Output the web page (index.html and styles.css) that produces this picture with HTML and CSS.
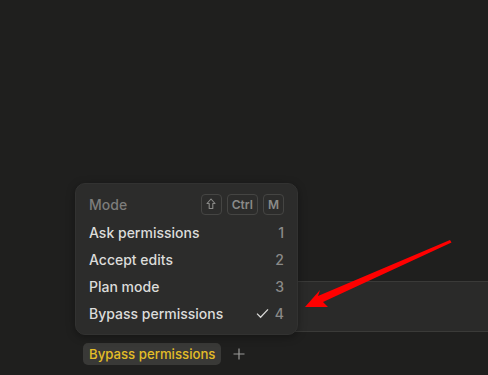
FILE: index.html
```html
<!DOCTYPE html>
<html>
<head>
<meta charset="utf-8">
<link rel="stylesheet" href="styles.css">
</head>
<body>
<div class="page">
  <div class="spacer"></div>
  <div class="composer"></div>
  <div class="toolbar">
    <span class="chip">Bypass permissions</span>
    <svg class="plus" width="12" height="12" viewBox="0 0 12 12"><path d="M6 0.5 V11.5 M0.5 6 H11.5" stroke="#9a9a98" stroke-width="1.2"/></svg>
  </div>

  <div class="menu">
    <div class="menu-head">
      <span class="menu-title">Mode</span>
      <span class="keys">
        <span class="key"><svg width="10" height="12" viewBox="0 0 10 12"><path d="M5 1 L9 5.5 L6.8 5.5 L6.8 10.5 L3.2 10.5 L3.2 5.5 L1 5.5 Z" fill="none" stroke="#8a8a88" stroke-width="1.1" stroke-linejoin="round"/></svg></span>
        <span class="key">Ctrl</span>
        <span class="key">M</span>
      </span>
    </div>
    <div class="item"><span>Ask permissions</span><span class="num">1</span></div>
    <div class="item"><span>Accept edits</span><span class="num">2</span></div>
    <div class="item"><span>Plan mode</span><span class="num">3</span></div>
    <div class="item"><span>Bypass permissions</span><span class="right"><svg class="check" width="13" height="11" viewBox="0 0 13 11"><path d="M1 5.6 L4.6 9.2 L12 1.4" fill="none" stroke="#d8d8d6" stroke-width="1.3"/></svg><span class="num">4</span></span></div>
  </div>

  <svg class="arrow" width="488" height="375" viewBox="0 0 488 375">
    <polygon fill="#ff0000" points="450,240 451.5,242.5 323,302 328,307 305,307 320,290 318,296"/>
  </svg>
</div>
</body>
</html>
```
FILE: styles.css
```css
html, body {
  margin: 0;
  padding: 0;
  background: #1f1f1e;
  font-family: Inter, "Noto Sans", sans-serif;
}
.page {
  position: relative;
  width: 488px;
  height: 375px;
  display: flex;
  flex-direction: column;
  overflow: hidden;
}
.spacer {
  height: 281px;
  flex: none;
}
.composer {
  height: 49px;
  margin-left: 120px;
  margin-right: -20px;
  background: #2a2a29;
  border: 1px solid #3a3a38;
  border-radius: 10px 0 0 10px;
  flex: none;
}
.toolbar {
  display: flex;
  align-items: center;
  gap: 12px;
  padding: 11px 0 0 83px;
}
.chip {
  background: #393937;
  color: #e3bd27;
  font-size: 13.2px;
  font-weight: 500;
  line-height: 22px;
  padding: 0 6px;
  border-radius: 5px;
}
.plus {
  display: block;
}
.menu {
  position: absolute;
  left: 75px;
  top: 183px;
  width: 223px;
  box-sizing: border-box;
  background: #2c2c2b;
  border: 1px solid #323231;
  border-radius: 10px;
  padding: 9px 13px 7px 13px;
  box-shadow: 0 2px 8px rgba(0,0,0,0.35);
}
.menu-head {
  display: flex;
  justify-content: space-between;
  align-items: center;
  height: 22px;
  margin-bottom: 4px;
}
.menu-title {
  color: #7d7d7b;
  font-size: 14px;
  font-weight: 500;
}
.keys {
  display: flex;
  gap: 5px;
}
.key {
  height: 21px;
  min-width: 21px;
  box-sizing: border-box;
  padding: 0 4px;
  border: 1px solid #454543;
  border-radius: 4px;
  color: #8a8a88;
  font-size: 12px;
  font-weight: 600;
  display: flex;
  align-items: center;
  justify-content: center;
}
.item {
  display: flex;
  justify-content: space-between;
  align-items: center;
  height: 27px;
  color: #dcdcda;
  font-size: 14px;
  font-weight: 500;
}
.num {
  color: #8a8a88;
  font-size: 14px;
  font-weight: 500;
}
.right {
  display: flex;
  align-items: center;
  gap: 6px;
}
.check {
  display: block;
}
.arrow {
  position: absolute;
  left: 0;
  top: 0;
  pointer-events: none;
}
```
